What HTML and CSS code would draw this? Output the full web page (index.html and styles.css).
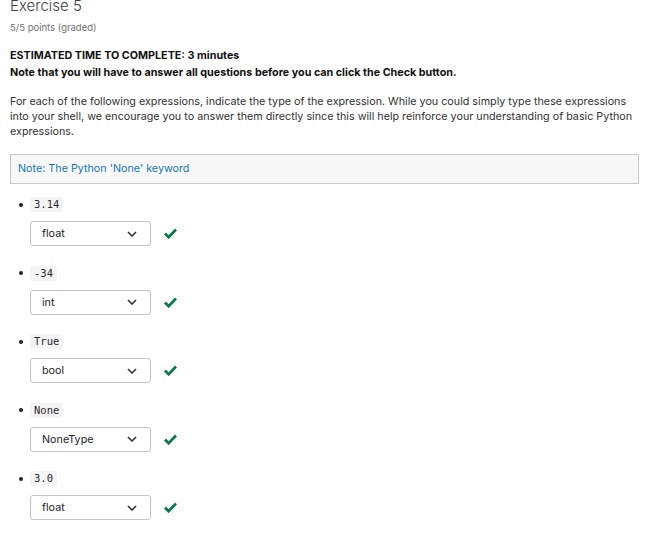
FILE: index.html
```html
<!DOCTYPE html>
<html>
<head>
<meta charset="utf-8">
<link rel="stylesheet" href="styles.css">
</head>
<body>
<div class="page">
  <h2 class="title">Exercise 5</h2>
  <div class="points">5/5 points (graded)</div>
  <p class="bold">ESTIMATED TIME TO COMPLETE: 3 minutes<br>Note that you will have to answer all questions before you can click the Check button.</p>
  <p class="text">For each of the following expressions, indicate the type of the expression. While you could simply type these expressions into your shell, we encourage you to answer them directly since this will help reinforce your understanding of basic Python expressions.</p>
  <div class="note">Note: The Python 'None' keyword</div>
  <ul class="items">
    <li class="item"><div class="head"><code class="code">3.14</code></div>
      <div class="answer"><div class="select"><span>float</span><svg class="chev" width="10" height="6" viewBox="0 0 10 6"><path d="M1 1 L5 5 L9 1" fill="none" stroke="#333" stroke-width="1.6"/></svg></div><svg class="check" width="13" height="11" viewBox="0 0 13 11"><path d="M1 5.5 L4.6 9.2 L12 1.5" fill="none" stroke="#0b7a4b" stroke-width="2.8"/></svg></div></li>
    <li class="item"><div class="head"><code class="code">-34</code></div>
      <div class="answer"><div class="select"><span>int</span><svg class="chev" width="10" height="6" viewBox="0 0 10 6"><path d="M1 1 L5 5 L9 1" fill="none" stroke="#333" stroke-width="1.6"/></svg></div><svg class="check" width="13" height="11" viewBox="0 0 13 11"><path d="M1 5.5 L4.6 9.2 L12 1.5" fill="none" stroke="#0b7a4b" stroke-width="2.8"/></svg></div></li>
    <li class="item"><div class="head"><code class="code">True</code></div>
      <div class="answer"><div class="select"><span>bool</span><svg class="chev" width="10" height="6" viewBox="0 0 10 6"><path d="M1 1 L5 5 L9 1" fill="none" stroke="#333" stroke-width="1.6"/></svg></div><svg class="check" width="13" height="11" viewBox="0 0 13 11"><path d="M1 5.5 L4.6 9.2 L12 1.5" fill="none" stroke="#0b7a4b" stroke-width="2.8"/></svg></div></li>
    <li class="item"><div class="head"><code class="code">None</code></div>
      <div class="answer"><div class="select"><span>NoneType</span><svg class="chev" width="10" height="6" viewBox="0 0 10 6"><path d="M1 1 L5 5 L9 1" fill="none" stroke="#333" stroke-width="1.6"/></svg></div><svg class="check" width="13" height="11" viewBox="0 0 13 11"><path d="M1 5.5 L4.6 9.2 L12 1.5" fill="none" stroke="#0b7a4b" stroke-width="2.8"/></svg></div></li>
    <li class="item"><div class="head"><code class="code">3.0</code></div>
      <div class="answer"><div class="select"><span>float</span><svg class="chev" width="10" height="6" viewBox="0 0 10 6"><path d="M1 1 L5 5 L9 1" fill="none" stroke="#333" stroke-width="1.6"/></svg></div><svg class="check" width="13" height="11" viewBox="0 0 13 11"><path d="M1 5.5 L4.6 9.2 L12 1.5" fill="none" stroke="#0b7a4b" stroke-width="2.8"/></svg></div></li>
  </ul>
</div>
</body>
</html>
```

FILE: styles.css
```css
html, body {
  margin: 0;
  padding: 0;
  background: #fff;
}
body {
  font-family: Inter, "Open Sans", sans-serif;
  color: #313131;
  font-size: 10.75px;
}
.page {
  padding: 0 26px 0 10px;
}
.title {
  margin: -4px 0 0 0;
  font-size: 15px;
  font-weight: 300;
  line-height: 20px;
  color: #414141;
}
.points {
  margin-top: 6px;
  font-size: 9.5px;
  line-height: 12px;
  color: #707070;
}
.bold {
  margin: 13px 0 0 0;
  font-weight: 700;
  line-height: 17px;
  color: #111;
}
.text {
  margin: 13px 0 0 0;
  line-height: 15px;
  color: #313131;
}
.note {
  margin-top: 15px;
  height: 28px;
  line-height: 28px;
  padding: 0 7px;
  border: 1px solid #c8c8c8;
  background: #f7f7f7;
  color: #1576b5;
}
.items {
  margin: 13px 0 0 0;
  padding: 0 0 0 9px;
  list-style: none;
}
.item {
  height: 68.5px;
}
.head {
  display: flex;
  align-items: center;
  gap: 7px;
  height: 15px;
}
.head::before {
  content: "";
  width: 4px;
  height: 4px;
  border-radius: 50%;
  background: #222;
}
.code {
  display: inline-block;
  font-family: "DejaVu Sans Mono", monospace;
  font-size: 10.5px;
  line-height: 15px;
  padding: 0 4px;
  background: #f4f4f4;
  border-radius: 2px;
  color: #2a2a2a;
}
.answer {
  margin: 9px 0 0 11px;
  display: flex;
  align-items: center;
  gap: 13px;
}
.select {
  box-sizing: border-box;
  width: 121px;
  height: 25px;
  border: 1px solid #c4c4c4;
  border-radius: 3px;
  display: flex;
  align-items: center;
  justify-content: space-between;
  padding: 0 13px 0 11px;
  color: #222;
}
.chev {
  display: block;
}
.check {
  display: block;
}
```
